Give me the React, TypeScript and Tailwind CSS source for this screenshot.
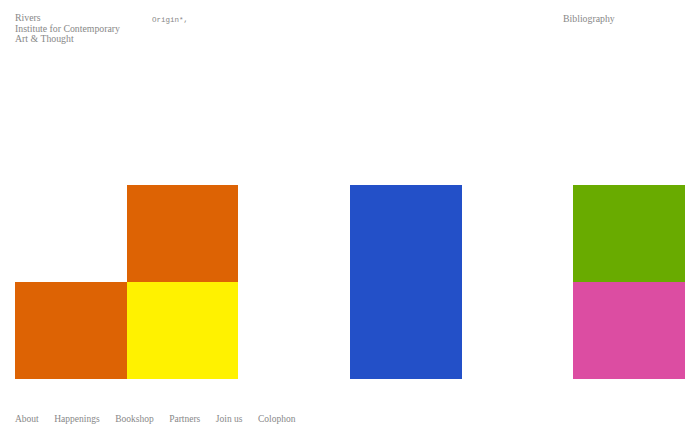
import React from 'react';

const NAV = ['About', 'Happenings', 'Bookshop', 'Partners', 'Join us', 'Colophon'];

// 6 x 2 grid of blocks; null = empty cell
const CELLS: (string | null)[] = [
  null, 'bg-[#dd6304]', null, 'bg-[#2350c8]', null, 'bg-[#69ab00]',
  'bg-[#dd6304]', 'bg-[#fff200]', null, 'bg-[#2350c8]', null, 'bg-[#dc4da2]',
];

export default function App() {
  return (
    <div className="h-screen w-full bg-white flex flex-col px-[15px] text-[#888888] font-['Liberation_Serif',serif] overflow-hidden">
      <header className="grid grid-cols-[137px_1fr_122px] pt-[13px] text-[9.8px] leading-[10.6px]">
        <div>
          <div>Rivers</div>
          <div>Institute for Contemporary</div>
          <div>Art &amp; Thought</div>
        </div>
        <div className="font-['Liberation_Mono',monospace] text-[7.5px] leading-[10.6px] pt-[2px]">Origin*,</div>
        <div className="pt-[1px]">Bibliography</div>
      </header>

      <main className="mt-[140px] grid grid-cols-6 grid-rows-[97px_97px]">
        {CELLS.map((c, i) => (
          <div key={i} className={c ?? ''} />
        ))}
      </main>

      <footer className="mt-auto pb-[13px] flex gap-[15.5px] text-[9.5px] leading-[12px]">
        {NAV.map(n => (
          <span key={n}>{n}</span>
        ))}
      </footer>
    </div>
  );
}
